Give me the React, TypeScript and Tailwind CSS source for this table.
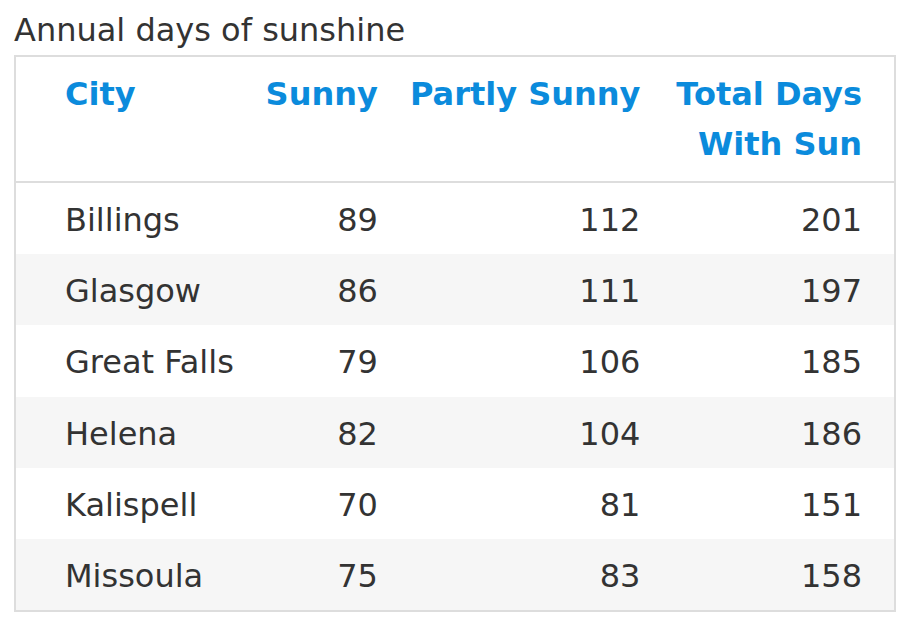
const rows = [
  { city: "Billings", sunny: 89, partly: 112, total: 201 },
  { city: "Glasgow", sunny: 86, partly: 111, total: 197 },
  { city: "Great Falls", sunny: 79, partly: 106, total: 185 },
  { city: "Helena", sunny: 82, partly: 104, total: 186 },
  { city: "Kalispell", sunny: 70, partly: 81, total: 151 },
  { city: "Missoula", sunny: 75, partly: 83, total: 158 },
]

export default function App() {
  return (
    <div className="min-h-screen bg-white pl-[14px] font-['DejaVu_Sans',sans-serif] text-[32px] text-[#333]">
      <div className="pt-[6px] leading-[49px]">Annual days of sunshine</div>
      <table className="w-[882px] table-fixed border-collapse border-2 border-[#ddd]">
        <colgroup>
          <col className="w-[246px]" />
          <col className="w-[132px]" />
          <col className="w-[262px]" />
          <col className="w-[238px]" />
        </colgroup>
        <thead>
          <tr className="border-b-2 border-[#ddd] align-top font-bold leading-[50px] text-[#0b8bdc]">
            <th className="pl-[49px] pt-[12px] pb-[12px] text-left">City</th>
            <th className="pr-4 pt-[12px] pb-[12px] text-right">Sunny</th>
            <th className="whitespace-nowrap pr-4 pt-[12px] pb-[12px] text-right">Partly Sunny</th>
            <th className="whitespace-nowrap pr-8 pt-[12px] pb-[12px] text-right">
              Total Days
              <br />
              With Sun
            </th>
          </tr>
        </thead>
        <tbody>
          {rows.map((r, i) => (
            <tr key={r.city} className={`leading-[51.2px] ${i % 2 === 1 ? "bg-[#f6f6f6]" : "bg-white"}`}>
              <td className="pl-[49px] pt-[12px] pb-[8px] text-left">{r.city}</td>
              <td className="pr-4 pt-[12px] pb-[8px] text-right">{r.sunny}</td>
              <td className="pr-4 pt-[12px] pb-[8px] text-right">{r.partly}</td>
              <td className="pr-8 pt-[12px] pb-[8px] text-right">{r.total}</td>
            </tr>
          ))}
        </tbody>
      </table>
    </div>
  )
}
